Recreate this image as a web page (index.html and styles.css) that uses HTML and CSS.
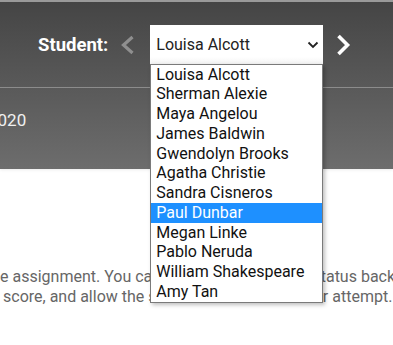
FILE: index.html
```html
<!DOCTYPE html>
<html lang="en">
<head>
  <meta charset="UTF-8" />
  <meta name="viewport" content="width=device-width, initial-scale=1" />
  <title>Grade submission</title>
  <link rel="stylesheet" href="styles.css">
</head>
<body>
  <header class="banner">
    <div class="toolbar">
      <span class="label">Student:</span>
      <button class="nav prev" disabled aria-label="Previous student">
        <svg width="15" height="20" viewBox="0 0 15 20"><path d="M12.5 2 L3.5 10 L12.5 18" fill="none" stroke="currentColor" stroke-width="3.2"/></svg>
      </button>
      <div class="picker">
        <div class="select">
          <span>Louisa Alcott</span>
          <svg width="12" height="8" viewBox="0 0 12 8"><path d="M1.5 1.5 L6 6 L10.5 1.5" fill="none" stroke="#222" stroke-width="1.8"/></svg>
        </div>
        <ul class="options">
          <li>Louisa Alcott</li>
          <li>Sherman Alexie</li>
          <li>Maya Angelou</li>
          <li>James Baldwin</li>
          <li>Gwendolyn Brooks</li>
          <li>Agatha Christie</li>
          <li>Sandra Cisneros</li>
          <li class="active">Paul Dunbar</li>
          <li>Megan Linke</li>
          <li>Pablo Neruda</li>
          <li>William Shakespeare</li>
          <li>Amy Tan</li>
        </ul>
      </div>
      <button class="nav next" aria-label="Next student">
        <svg width="15" height="22" viewBox="0 0 15 22"><path d="M2.5 2 L11.5 11 L2.5 20" fill="none" stroke="currentColor" stroke-width="3.6"/></svg>
      </button>
    </div>
    <div class="meta">
      <span class="due">2020</span>
    </div>
  </header>
  <main class="content">
    <p class="note">
      <span>e assignment. You can reset its submission status back</span>
      <span class="second">score, and allow the student to make a further attempt.</span>
    </p>
  </main>
</body>
</html>
```

FILE: styles.css
```css
html, body { margin: 0; padding: 0; }
body {
  font-family: Roboto, "Liberation Sans", sans-serif;
  background: #fff;
  width: 393px;
  height: 345px;
  overflow: hidden;
}
.banner {
  border-top: 2px solid #9a9a9a;
  background: linear-gradient(to bottom, #454545, #6d6d6d);
  color: #fff;
  box-shadow: 0 1px 3px rgba(0, 0, 0, 0.08);
}
.toolbar {
  height: 85px;
  display: flex;
  align-items: center;
  padding-left: 38px;
  border-bottom: 1px solid #8c8c8c;
}
.label { font-weight: 700; font-size: 18.5px; }
.nav {
  background: none; border: none; padding: 0;
  display: flex; align-items: center;
  color: #fff; cursor: pointer;
}
.nav.prev { margin-left: 12px; color: #8f8f8f; cursor: default; }
.nav.next { margin-left: 13px; }
.picker { position: relative; margin-left: 15px; }
.select {
  width: 173px; height: 40px;
  box-sizing: border-box;
  background: linear-gradient(to bottom, #fff 80%, #f1f1f1);
  color: #222;
  display: flex; align-items: center; justify-content: space-between;
  padding: 0 4px 0 6px;
  font-size: 16px;
}
.options {
  position: absolute;
  top: 39px; left: 0;
  width: 173px;
  box-sizing: border-box;
  margin: 0; padding: 0;
  list-style: none;
  background: #fff;
  border: 1px solid #7a7a7a;
  box-shadow: 2px 2px 4px rgba(0, 0, 0, 0.25);
  color: #111;
  font-size: 16px;
  z-index: 2;
}
.options li { height: 19.75px; line-height: 19.75px; padding-left: 5px; white-space: nowrap; }
.options li.active { background: #1e90ff; color: #fff; }
.meta { height: 81px; padding-top: 22px; box-sizing: border-box; }
.due { display: inline-block; margin-left: -12px; font-size: 17px; color: #f0f0f0; white-space: nowrap; }
.content { padding-top: 98px; }
.note {
  margin: 0;
  color: #666;
  font-size: 16px;
  line-height: 20px;
  white-space: nowrap;
}
.note span { display: block; }
.note .second { margin-left: 3px; }
```
